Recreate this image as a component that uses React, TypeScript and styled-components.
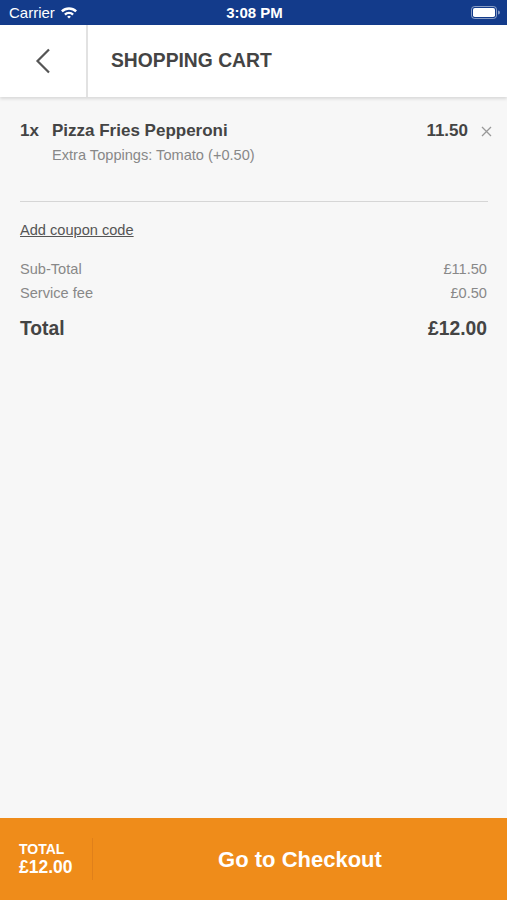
import React from "react";
import styled, { createGlobalStyle } from "styled-components";

const Global = createGlobalStyle`
  html, body { margin: 0; padding: 0; height: 100%; }
  body { font-family: "Liberation Sans", Arial, sans-serif; background: #f7f7f7; }
  #root { height: 100%; }
`;

const Page = styled.div`
  height: 900px;
  display: flex;
  flex-direction: column;
  background: #f7f7f7;
`;

const StatusBar = styled.div`
  height: 25px;
  background: #133b8b;
  color: #fff;
  display: grid;
  grid-template-columns: 1fr auto 1fr;
  align-items: center;
  padding: 0 7px 0 9px;
  font-size: 15px;
`;

const Carrier = styled.div`
  display: flex;
  align-items: center;
  gap: 5px;
`;

const Time = styled.div`
  font-weight: bold;
  font-size: 15px;
`;

const BatteryWrap = styled.div`
  justify-self: end;
  display: flex;
  align-items: center;
`;

const Header = styled.div`
  height: 72px;
  background: #fff;
  display: flex;
  align-items: stretch;
  box-shadow: 0 2px 3px rgba(0, 0, 0, 0.12);
  position: relative;
  z-index: 1;
`;

const BackButton = styled.div`
  width: 86px;
  border-right: 2px solid #e2e2e2;
  display: flex;
  align-items: center;
  justify-content: center;
`;

const Title = styled.div`
  display: flex;
  align-items: center;
  padding-left: 23px;
  font-size: 19.3px;
  font-weight: bold;
  color: #444;
`;

const Content = styled.div`
  flex: 1;
  padding: 24px 19px 0 20px;
`;

const ItemRow = styled.div`
  display: flex;
  align-items: flex-start;
`;

const Qty = styled.div`
  width: 32px;
  font-size: 17px;
  font-weight: bold;
  color: #444;
  line-height: 20px;
`;

const ItemInfo = styled.div`
  flex: 1;
`;

const ItemName = styled.div`
  font-size: 17px;
  font-weight: bold;
  color: #444;
  line-height: 20px;
`;

const ItemOption = styled.div`
  font-size: 14.6px;
  color: #888;
  margin-top: 6px;
`;

const ItemPrice = styled.div`
  font-size: 17px;
  font-weight: bold;
  color: #444;
  line-height: 20px;
`;

const Remove = styled.div`
  width: 24px;
  margin-right: -4px;
  display: flex;
  justify-content: flex-end;
  padding-top: 5px;
`;

const Divider = styled.div`
  height: 1px;
  background: #d6d6d6;
  margin: 38px 0 20px;
`;

const Coupon = styled.div`
  font-size: 14.6px;
  color: #555;
  text-decoration: underline;
  margin-bottom: 22px;
`;

const SummaryRow = styled.div<{ $total?: boolean }>`
  display: flex;
  justify-content: space-between;
  font-size: ${(p) => (p.$total ? "19.3px" : "14.6px")};
  font-weight: ${(p) => (p.$total ? "bold" : "normal")};
  color: ${(p) => (p.$total ? "#444" : "#888")};
  line-height: ${(p) => (p.$total ? "22px" : "18px")};
  margin-top: ${(p) => (p.$total ? "16px" : "6px")};
  padding-right: 1px;
`;

const Footer = styled.div`
  height: 82px;
  background: #ef8c1a;
  display: flex;
  align-items: center;
  color: #fff;
`;

const FooterTotal = styled.div`
  width: 73px;
  padding-left: 19px;
  border-right: 1px solid #e0801a;
  align-self: stretch;
  margin: 20px 0;
  display: flex;
  flex-direction: column;
  justify-content: center;
  font-weight: bold;
`;

const FooterLabel = styled.div`
  font-size: 14px;
  line-height: 16px;
`;

const FooterValue = styled.div`
  font-size: 17.5px;
  line-height: 20px;
`;

const Checkout = styled.div`
  flex: 1;
  text-align: center;
  font-size: 22px;
  font-weight: bold;
  padding-top: 1px;
`;

export default function App() {
  return (
    <>
      <Global />
      <Page>
        <StatusBar>
          <Carrier>
            Carrier
            <svg width="18" height="13" viewBox="0 0 18 13">
              <path d="M1 4.5 A11.5 11.5 0 0 1 17 4.5 L15.3 6.3 A9 9 0 0 0 2.7 6.3 Z" fill="#fff" />
              <path d="M4.1 7.7 A7 7 0 0 1 13.9 7.7 L12.2 9.4 A4.6 4.6 0 0 0 5.8 9.4 Z" fill="#fff" />
              <path d="M7.2 10.8 A2.5 2.5 0 0 1 10.8 10.8 L9 12.6 Z" fill="#fff" />
            </svg>
          </Carrier>
          <Time>3:08 PM</Time>
          <BatteryWrap>
            <svg width="29" height="13" viewBox="0 0 29 13">
              <rect x="0.5" y="0.5" width="25" height="12" rx="3" fill="none" stroke="#fff" strokeOpacity="0.5" />
              <rect x="2" y="2" width="22" height="9" rx="1.8" fill="#fff" />
              <path d="M27 4.5 a1.5 1.5 0 0 1 0 4 Z" fill="#fff" fillOpacity="0.5" />
            </svg>
          </BatteryWrap>
        </StatusBar>
        <Header>
          <BackButton>
            <svg width="16" height="26" viewBox="0 0 16 26">
              <path d="M14 1.5 L2.5 13 L14 24.5" fill="none" stroke="#555" strokeWidth="2.2" />
            </svg>
          </BackButton>
          <Title>SHOPPING CART</Title>
        </Header>
        <Content>
          <ItemRow>
            <Qty>1x</Qty>
            <ItemInfo>
              <ItemName>Pizza Fries Pepperoni</ItemName>
              <ItemOption>Extra Toppings: Tomato (+0.50)</ItemOption>
            </ItemInfo>
            <ItemPrice>11.50</ItemPrice>
            <Remove>
              <svg width="11" height="11" viewBox="0 0 11 11">
                <path d="M1 1 L10 10 M10 1 L1 10" stroke="#999" strokeWidth="1.3" />
              </svg>
            </Remove>
          </ItemRow>
          <Divider />
          <Coupon>Add coupon code</Coupon>
          <SummaryRow>
            <span>Sub-Total</span>
            <span>£11.50</span>
          </SummaryRow>
          <SummaryRow>
            <span>Service fee</span>
            <span>£0.50</span>
          </SummaryRow>
          <SummaryRow $total>
            <span>Total</span>
            <span>£12.00</span>
          </SummaryRow>
        </Content>
        <Footer>
          <FooterTotal>
            <FooterLabel>TOTAL</FooterLabel>
            <FooterValue>£12.00</FooterValue>
          </FooterTotal>
          <Checkout>Go to Checkout</Checkout>
        </Footer>
      </Page>
    </>
  );
}
